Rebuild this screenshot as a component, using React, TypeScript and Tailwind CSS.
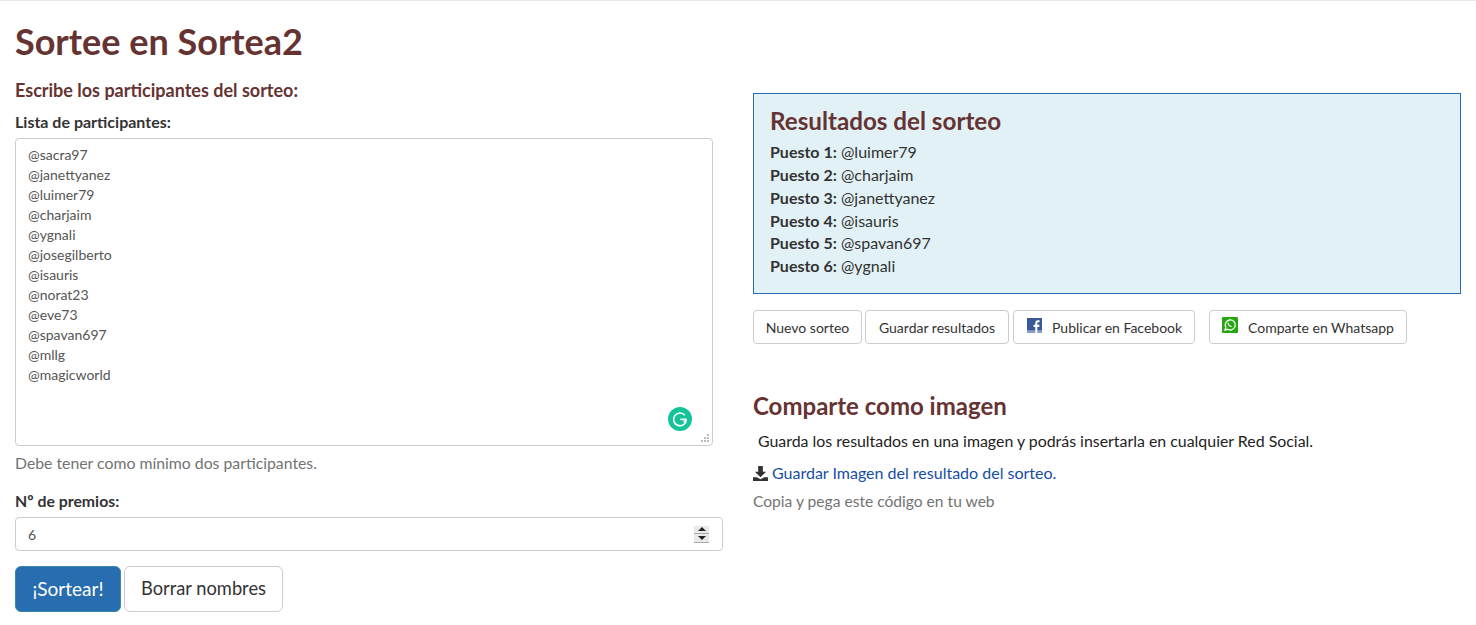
export default function App() {
  const names = ["@sacra97", "@janettyanez", "@luimer79", "@charjaim", "@ygnali", "@josegilberto", "@isauris", "@norat23", "@eve73", "@spavan697", "@mllg", "@magicworld"];
  const results = ["@luimer79", "@charjaim", "@janettyanez", "@isauris", "@spavan697", "@ygnali"];
  return (
    <div className="h-[625px] overflow-hidden border-t border-[#e7e7e7] bg-white font-['Lato',sans-serif] text-[16px] text-[#333]">
      <div className="flex px-[15px]">
        <div className="w-[708px] shrink-0">
          <h1 className="mt-[20px] text-[36px] leading-[40px] font-bold text-[#663333]">Sortee en Sortea2</h1>
          <h2 className="mt-[19px] text-[18px] leading-[20px] font-bold text-[#663333]">Escribe los participantes del sorteo:</h2>
          <label className="mt-[12px] block leading-[20px] font-bold">Lista de participantes:</label>
          <div className="relative mt-[6px] h-[308px] w-[698px] rounded-[4px] border border-[#ccc] px-3 py-[6px] text-[14px] leading-[20px] text-[#555]">
            {names.map((n) => <div key={n}>{n}</div>)}
            <div className="absolute top-[268px] left-[652px] flex h-6 w-6 items-center justify-center rounded-full bg-[#15c39a]">
              <svg viewBox="0 0 24 24" className="h-[18px] w-[18px]" fill="none" stroke="white" strokeWidth="2.2"><path d="M18.5 7A8.5 8.5 0 1 0 20.5 13" /><path d="M12 12.5h8.5" /><path d="M17 16l3.5-3.5" /></svg>
            </div>
            <svg viewBox="0 0 10 10" className="absolute right-[2px] bottom-[2px] h-[10px] w-[10px]" fill="#bbb"><rect x="7" y="1" width="2" height="2" /><rect x="4" y="4" width="2" height="2" /><rect x="7" y="4" width="2" height="2" /><rect x="1" y="7" width="2" height="2" /><rect x="4" y="7" width="2" height="2" /><rect x="7" y="7" width="2" height="2" /></svg>
          </div>
          <p className="mt-[7px] text-[15.8px] leading-[20px] text-[#737373]">Debe tener como mínimo dos participantes.</p>
          <label className="mt-[18px] block text-[15.85px] leading-[20px] font-bold">Nº de premios:</label>
          <div className="mt-[6px] flex h-[34px] items-center justify-between rounded-[4px] border border-[#ccc] px-3 text-[14px] text-[#555]">
            <span>6</span>
            <div className="mr-[1px] flex h-[17px] w-[15px] flex-col bg-[#e9e9e9]">
              <div className="flex h-[8px] items-center justify-center border-b border-[#aaa]">
                <svg viewBox="0 0 8 4" className="h-[4px] w-[8px]" fill="#222"><path d="M4 0 8 4H0Z" /></svg>
              </div>
              <div className="flex h-[9px] items-center justify-center border-b border-[#aaa]">
                <svg viewBox="0 0 8 4" className="h-[4px] w-[8px]" fill="#222"><path d="M0 0H8L4 4Z" /></svg>
              </div>
            </div>
          </div>
          <div className="mt-[15px] flex gap-[3px]">
            <button className="h-[46px] w-[106px] rounded-[6px] border border-[#3a87ad] bg-[#286db0] text-[19px] text-white">¡Sortear!</button>
            <button className="h-[46px] w-[159px] rounded-[6px] border border-[#ccc] bg-white text-[18.3px]">Borrar nombres</button>
          </div>
        </div>
        <div className="ml-[30px] w-[708px] pt-[92px]">
          <div className="h-[201px] border border-[#2a6cb0] bg-[#e2f1f6] px-4 py-[9px]">
            <h2 className="mt-[2px] text-[24.2px] leading-[32px] font-bold text-[#663333]">Resultados del sorteo</h2>
            <div className="mt-[4.3px] text-[16px] leading-[22.8px]">
              {results.map((r, i) => <div key={r}><b>Puesto {i + 1}:</b> {r}</div>)}
            </div>
          </div>
          <div className="mt-4 flex text-[14px] text-[#333]">
            <button className="h-[34px] w-[109px] rounded-[4px] border border-[#ccc]">Nuevo sorteo</button>
            <button className="ml-[3px] h-[34px] w-[144px] rounded-[4px] border border-[#ccc]">Guardar resultados</button>
            <button className="ml-[4px] flex h-[34px] w-[182px] items-center rounded-[4px] border border-[#ccc] pl-[13px]">
              <svg viewBox="0 0 16 16" className="mr-[10px] mb-[4px] h-[15px] w-[15px]"><rect width="16" height="16" fill="#3b5998" /><rect y="13" width="16" height="3" fill="#8b9dc3" /><path d="M11 16V9.5h2l.4-2.4H11V5.8c0-.8.3-1.2 1.2-1.2h1.2V2.5h-1.9C10 2.500 8.800 3.700 8.800 5.500v1.600H7V9.500h1.800V16Z" fill="white" /></svg>
              Publicar en Facebook
            </button>
            <button className="ml-[14px] flex h-[34px] w-[198px] items-center rounded-[4px] border border-[#ccc] pl-[12px]">
              <svg viewBox="0 0 16 16" className="mr-[10px] mb-[4px] h-[16px] w-[16px]"><rect width="16" height="16" rx="1" fill="#25a80f" /><path d="M3 13l.8-2.800A5 5 0 1 1 5.800 12.300Z" fill="none" stroke="white" strokeWidth="1.300" /><path d="M6 5.500c-.7.7-.5 1.900.7 3.200s2.500 1.700 3.300 1l-1-1.200-.8.3-1.300-1.400.3-.8Z" fill="white" /></svg>
              Comparte en Whatsapp
            </button>
          </div>
          <h2 className="mt-[46px] text-[24px] leading-[32px] font-bold text-[#663333]">Comparte como imagen</h2>
          <p className="mt-[9px] ml-[5px] text-[15.9px] leading-[20px] text-[#222]">Guarda los resultados en una imagen y podrás insertarla en cualquier Red Social.</p>
          <div className="mt-[12px] flex items-center leading-[20px]">
            <svg viewBox="0 0 16 16" className="mr-1 h-[15px] w-[15px]" fill="#333"><path d="M5.500 0h5v6h3.500l-6 6-6-6h3.500Z" /><path d="M0 12h4l4 2 4-2h4v4H0Z" /></svg>
            <a className="text-[#164ea5]">Guardar Imagen del resultado del sorteo.</a>
          </div>
          <p className="mt-[8px] text-[15.6px] leading-[20px] text-[#737373]">Copia y pega este código en tu web</p>
        </div>
      </div>
    </div>
  );
}
